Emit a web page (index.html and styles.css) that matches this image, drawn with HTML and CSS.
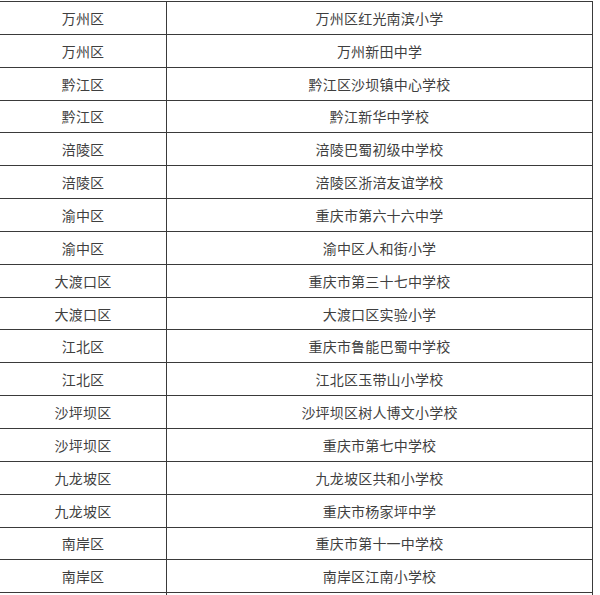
FILE: index.html
```html
<!DOCTYPE html>
<html lang="zh-CN">
<head>
<meta charset="utf-8">
<title>学校名单</title>
<link rel="stylesheet" href="styles.css">
</head>
<body>
<table class="list">
<tbody>
<tr><td class="area">万州区</td><td class="school">万州区红光南滨小学</td></tr>
<tr><td class="area">万州区</td><td class="school">万州新田中学</td></tr>
<tr><td class="area">黔江区</td><td class="school">黔江区沙坝镇中心学校</td></tr>
<tr><td class="area">黔江区</td><td class="school">黔江新华中学校</td></tr>
<tr><td class="area">涪陵区</td><td class="school">涪陵巴蜀初级中学校</td></tr>
<tr><td class="area">涪陵区</td><td class="school">涪陵区浙涪友谊学校</td></tr>
<tr><td class="area">渝中区</td><td class="school">重庆市第六十六中学</td></tr>
<tr><td class="area">渝中区</td><td class="school">渝中区人和街小学</td></tr>
<tr><td class="area">大渡口区</td><td class="school">重庆市第三十七中学校</td></tr>
<tr><td class="area">大渡口区</td><td class="school">大渡口区实验小学</td></tr>
<tr><td class="area">江北区</td><td class="school">重庆市鲁能巴蜀中学校</td></tr>
<tr><td class="area">江北区</td><td class="school">江北区玉带山小学校</td></tr>
<tr><td class="area">沙坪坝区</td><td class="school">沙坪坝区树人博文小学校</td></tr>
<tr><td class="area">沙坪坝区</td><td class="school">重庆市第七中学校</td></tr>
<tr><td class="area">九龙坡区</td><td class="school">九龙坡区共和小学校</td></tr>
<tr><td class="area">九龙坡区</td><td class="school">重庆市杨家坪中学</td></tr>
<tr><td class="area">南岸区</td><td class="school">重庆市第十一中学校</td></tr>
<tr><td class="area">南岸区</td><td class="school">南岸区江南小学校</td></tr>
<tr><td class="area"></td><td class="school"></td></tr>
</tbody>
</table>
</body>
</html>
```
FILE: styles.css
```css
html, body {
  margin: 0;
  padding: 0;
  background: #fff;
  overflow: hidden;
}
.list {
  border-collapse: collapse;
  margin: 1px 0 0 -1px;
  width: 594px;
  table-layout: fixed;
  font-family: "Noto Sans CJK SC", "Noto Sans", sans-serif;
  font-size: 14px;
  color: #3f3f3f;
}
.list td {
  border: 1px solid #3a3a3a;
  height: 32.85px;
  padding: 0;
  text-align: center;
  vertical-align: middle;
  line-height: 16px;
  letter-spacing: 0.2px;
  box-sizing: border-box;
}
.list .area {
  width: 167px;
}
```
